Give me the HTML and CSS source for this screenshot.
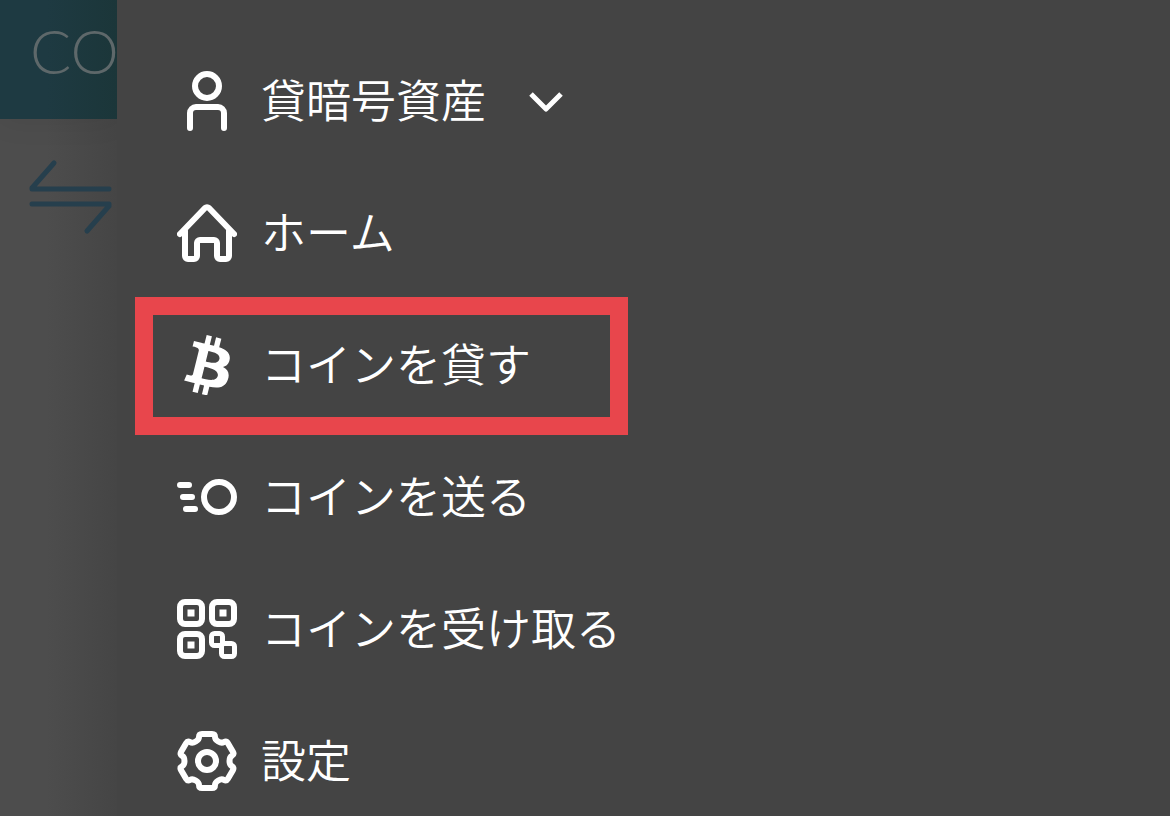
FILE: index.html
```html
<!DOCTYPE html>
<html lang="ja">
<head>
  <meta charset="UTF-8">
  <meta name="viewport" content="width=device-width, initial-scale=1">
  <title>メニュー</title>
  <link rel="stylesheet" href="styles.css">
</head>
<body>
  <div class="app">
    <div class="page">
      <header class="page-header"><span class="logo">CO</span></header>
      <div class="page-body">
        <svg class="swap" viewBox="0 0 84 76" aria-hidden="true">
          <path d="M25 4L3 29V30H80M3 45H80V47L58 72"/>
        </svg>
      </div>
    </div>

    <nav class="drawer">
      <button class="item" type="button">
        <svg class="icon" viewBox="0 0 60 60" aria-hidden="true">
          <circle cx="30" cy="15" r="12"/>
          <path d="M13 57V42a6 6 0 0 1 6-6h22a6 6 0 0 1 6 6v15"/>
        </svg>
        <span class="label">貸暗号資産</span>
        <svg class="chevron" viewBox="0 0 36 22" aria-hidden="true">
          <path d="M3 4L18 19L33 4"/>
        </svg>
      </button>
      <a class="item" href="#home">
        <svg class="icon" viewBox="0 0 60 60" aria-hidden="true">
          <path d="M3 31L28 5a3 3 0 0 1 4 0L57 31"/>
          <path d="M8 28V53a3 3 0 0 0 3 3h6a3 3 0 0 0 3-3V40a3 3 0 0 1 3-3h14a3 3 0 0 1 3 3v13a3 3 0 0 0 3 3h6a3 3 0 0 0 3-3V28"/>
        </svg>
        <span class="label">ホーム</span>
      </a>
      <a class="item marked" href="#lend">
        <svg class="icon solid" viewBox="5.8 6 19.8 19.8" aria-hidden="true">
          <path d="M23.189 14.02c.314-2.096-1.283-3.223-3.465-3.975l.708-2.84-1.728-.43-.69 2.765c-.454-.114-.92-.22-1.385-.326l.695-2.783L15.596 6l-.708 2.839c-.376-.086-.746-.17-1.104-.26l.002-.009-2.384-.595-.46 1.846s1.283.294 1.256.312c.7.175.826.638.805 1.006l-.806 3.235c.048.012.11.03.18.057l-.183-.045-1.13 4.532c-.086.212-.303.531-.793.41.018.025-1.256-.313-1.256-.313l-.858 1.978 2.25.561c.418.105.828.215 1.231.318l-.715 2.872 1.727.43.708-2.84c.472.127.93.245 1.378.357l-.706 2.828 1.728.43.715-2.866c2.948.558 5.164.333 6.097-2.333.752-2.146-.037-3.385-1.588-4.192 1.13-.26 1.98-1.003 2.207-2.538zm-3.95 5.538c-.533 2.147-4.148.986-5.32.695l.95-3.805c1.172.293 4.929.872 4.37 3.11zm.535-5.569c-.487 1.953-3.495.96-4.47.717l.86-3.45c.975.243 4.118.696 3.61 2.733z"/>
        </svg>
        <span class="label">コインを貸す</span>
      </a>
      <a class="item" href="#send">
        <svg class="icon" viewBox="0 0 60 60" aria-hidden="true">
          <circle cx="42" cy="30" r="15"/>
          <path d="M3 18h9M6 30h9M9 42h9"/>
        </svg>
        <span class="label">コインを送る</span>
      </a>
      <a class="item" href="#receive">
        <svg class="icon" viewBox="0 0 60 60" aria-hidden="true">
          <rect x="3" y="3" width="22" height="22" rx="5"/>
          <rect x="35" y="3" width="22" height="22" rx="5"/>
          <rect x="3" y="35" width="22" height="22" rx="5"/>
          <path class="dots" d="M10.500 10.500h7v7h-7zM42.500 10.500h7v7h-7zM10.500 42.500h7v7h-7z"/>
          <rect class="small" x="34.500" y="34.500" width="11" height="12" rx="3"/>
          <rect class="small" x="44.500" y="44.500" width="13" height="13" rx="3"/>
        </svg>
        <span class="label">コインを受け取る</span>
      </a>
      <a class="item" href="#settings">
        <svg class="icon" viewBox="-30 -30 60 60" aria-hidden="true">
          <circle cx="0" cy="0" r="9"/>
          <path d="M-5-27H5Q8-27 8-24C8-20.5 13.75-17.2 16.8-18.9Q19.4-20.4 20.9-17.8L25.9-9.2Q27.4-6.6 24.8-5.1C21.75-3.3 21.75 3.3 24.8 5.1Q27.4 6.6 25.9 9.2L20.9 17.8Q19.4 20.4 16.8 18.9C13.75 17.2 8 20.5 8 24Q8 27 5 27H-5Q-8 27-8 24C-8 20.5-13.75 17.2-16.8 18.9Q-19.4 20.4-20.9 17.8L-25.9 9.2Q-27.4 6.6-24.8 5.1C-21.75 3.3-21.75-3.3-24.8-5.1Q-27.4-6.6-25.9-9.2L-20.9-17.8Q-19.4-20.4-16.8-18.9C-13.75-17.2-8-20.5-8-24Q-8-27-5-27Z"/>
        </svg>
        <span class="label">設定</span>
      </a>
    </nav>
  </div>
</body>
</html>
```
FILE: styles.css
```css
*, *::after { box-sizing: border-box; }
body { margin: 0; background: #444; color: #fff; font-family: "Noto Sans CJK JP", sans-serif; }
.app { display: flex; height: 100vh; overflow: hidden; }

/* dimmed page behind the drawer */
.page { width: 10%; overflow: hidden; background: linear-gradient(to right, #4d4d4d 40%, #454545); }
.page-header { height: 119px; padding: 15px 0 0 30px; background: linear-gradient(to right, #1e3a42 40%, #1b3639); box-shadow: 0 0 30px rgba(0, 0, 0, 0.08); }
.logo { display: block; font-family: Lato, sans-serif; font-weight: 300; font-size: 61px; line-height: 72px; color: #5e686a; }
.page-body { padding: 40px 0 0 29px; }
.swap { display: block; width: 84px; height: 76px; fill: none; stroke: #263f4d; stroke-width: 5; stroke-linecap: round; stroke-linejoin: round; }

.drawer { flex: 1; padding-top: 35px; background: #444; }
.item { position: relative; display: flex; align-items: center; gap: 24px; width: 100%; height: 132px; padding: 0 60px; border: 0; background: none; color: #fff; font-family: inherit; font-size: 45px; font-weight: 350; line-height: 60px; text-align: left; text-decoration: none; cursor: pointer; }
.label { padding-bottom: 4px; }
.icon { flex: none; width: 60px; height: 60px; fill: none; stroke: #fff; stroke-width: 6; stroke-linecap: round; stroke-linejoin: round; }
.icon.solid, .icon .dots { fill: #fff; stroke: none; }
.icon .small { stroke-width: 5; }
.chevron { width: 36px; height: 22px; margin-left: 18px; fill: none; stroke: #fff; stroke-width: 5; stroke-linejoin: round; }

/* red frame round the marked row */
.marked::after { content: ""; position: absolute; top: -2px; left: 18px; width: 493px; height: 138px; border: 18px solid #e8464c; }
```
